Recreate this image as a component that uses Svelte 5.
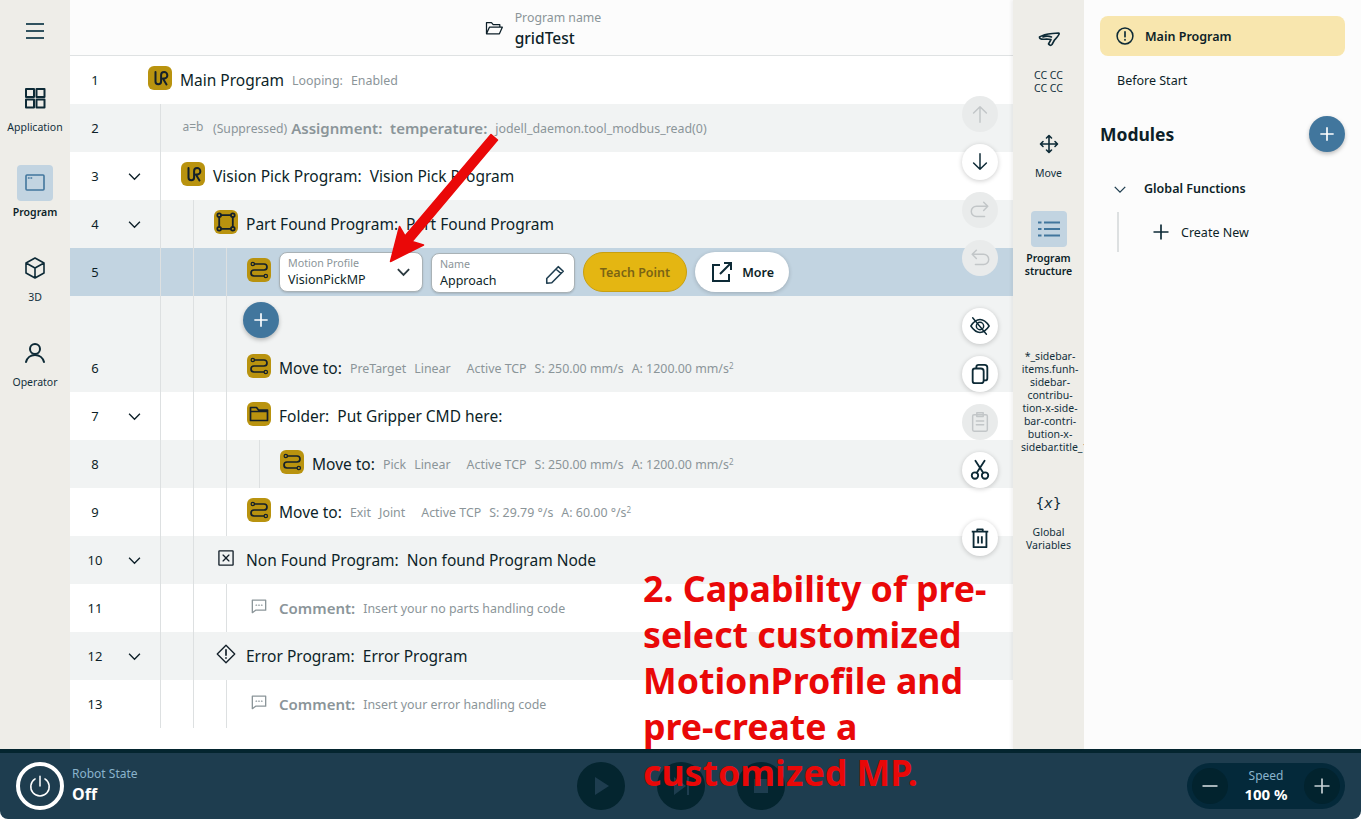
<script>
  const leftRail = [
    { id: 'grid', label: 'Application' },
    { id: 'window', label: 'Program', active: true },
    { id: 'cube', label: '3D' },
    { id: 'user', label: 'Operator' }
  ];

  const speedTail = [
    { t: 'Active TCP', gap: 16 },
    { t: 'S: 250.00 mm/s', gap: 8 },
    { t: 'A: 1200.00 mm/s', gap: 8, sup: '2' }
  ];

  const rows = [
    { n: 1, level: 0, icon: 'ur', title: 'Main Program', details: [{ t: 'Looping:', gap: 8 }, { t: 'Enabled', gap: 8 }] },
    { n: 2, level: 1, icon: 'assign', muted: true, pre: '(Suppressed)', title: 'Assignment:  temperature:', details: [{ t: 'jodell_daemon.tool_modbus_read(0)', gap: 8 }] },
    { n: 3, level: 1, open: true, icon: 'ur', title: 'Vision Pick Program:  Vision Pick Program' },
    { n: 4, level: 2, open: true, icon: 'frame', title: 'Part Found Program:  Part Found Program' },
    { n: 5, level: 3, icon: 'move', editing: true },
    { level: 3, add: true },
    { n: 6, level: 3, icon: 'move', title: 'Move to:', details: [{ t: 'PreTarget', gap: 8 }, { t: 'Linear', gap: 8 }, ...speedTail] },
    { n: 7, level: 3, open: true, icon: 'folder', title: 'Folder:  Put Gripper CMD here:' },
    { n: 8, level: 4, icon: 'move', title: 'Move to:', details: [{ t: 'Pick', gap: 8 }, { t: 'Linear', gap: 8 }, ...speedTail] },
    { n: 9, level: 3, icon: 'move', title: 'Move to:', details: [{ t: 'Exit', gap: 8 }, { t: 'Joint', gap: 8 }, { t: 'Active TCP', gap: 16 }, { t: 'S: 29.79 °/s', gap: 8 }, { t: 'A: 60.00 °/s', gap: 8, sup: '2' }] },
    { n: 10, level: 2, open: true, icon: 'cross', title: 'Non Found Program:  Non found Program Node' },
    { n: 11, level: 3, icon: 'comment', muted: true, title: 'Comment:', details: [{ t: 'Insert your no parts handling code', gap: 8 }] },
    { n: 12, level: 2, open: true, icon: 'warn', title: 'Error Program:  Error Program' },
    { n: 13, level: 3, icon: 'comment', muted: true, title: 'Comment:', details: [{ t: 'Insert your error handling code', gap: 8 }] }
  ];

  const floats = [
    { id: 'up', off: true },
    { id: 'down' },
    { id: 'redo', off: true },
    { id: 'undo', off: true, end: true },
    { id: 'eye' },
    { id: 'copy' },
    { id: 'paste', off: true },
    { id: 'cut', end: true },
    { id: 'trash' }
  ];

  function shade(row) {
    if (row.editing) return 'sel';
    if (row.add) return 'alt';
    return row.n % 2 === 0 ? 'alt' : '';
  }
</script>

{#snippet glyph(id)}
  <svg class="glyph" viewBox="0 0 24 24" fill="none" stroke="currentColor" stroke-width="1.6" stroke-linecap="round" stroke-linejoin="round">
    {#if id === 'grid'}
      <rect x="3" y="3" width="8" height="8" stroke-width="2" /><rect x="13.500" y="3" width="8" height="8" stroke-width="2" /><rect x="3" y="13.500" width="8" height="8" stroke-width="2" /><rect x="13.500" y="13.500" width="8" height="8" stroke-width="2" />
    {:else if id === 'window'}
      <rect x="3" y="4" width="18" height="15" rx="1" />
      <path d="M5.500 7h.6M8 7h.6" />
    {:else if id === 'cube'}
      <path d="M12 2 21 7v10l-9 5-9-5V7zM3 7l9 5 9-5M12 12v10" />
    {:else if id === 'user'}
      <circle cx="12" cy="8" r="5" stroke-width="2" /><path d="M3 21c1-4 4.500-7 9-7s8 3 9 7" stroke-width="2" />
    {:else if id === 'hand'}
      <path d="M2.500 11c3-2 8-3 13-3.500l6-.5c.8 0 .8 .8 .4 1.500-1.200 2.500-3 4-4.400 5.500l-2.500 4.500c-.5 1-1.500 1-2.200 .5l-1.300-1 2.500-4.500-4.500-.5C6 13.500 2 13.500 2.500 11zM6 11c2.500-1 6-1 8.500 0" />
    {:else if id === 'arrows'}
      <path d="M12 5v14M5 12h14M9.500 6 12 3.500 14.500 6M9.500 18l2.500 2.500 2.500-2.500M6 9.500 3.500 12 6 14.500M18 9.500l2.500 2.500-2.500 2.500" />
    {:else if id === 'list'}
      <path d="M1 5.500h3.500M7 5.500h16M1 12h3.500M7 12h16M1 18.500h3.500M7 18.500h16" stroke-width="1.800" stroke-linecap="butt" />
    {:else if id === 'up'}
      <path d="M12 21V4M5 11l7-7 7 7" />
    {:else if id === 'down'}
      <path d="M12 3v17M5 13l7 7 7-7" />
    {:else if id === 'redo'}
      <path d="M20 8H8a5 5 0 0 0 0 11h9M16 3.500 20.500 8 16 12.500" />
    {:else if id === 'undo'}
      <path d="M4 8h12a5 5 0 0 1 0 11H7M8 3.500 3.500 8 8 12.500" />
    {:else if id === 'eye'}
      <path d="M2 12c3-4.500 6-7 10-7s7 2.500 10 7c-3 4.500-6 7-10 7s-7-2.500-10-7z" /><circle cx="12" cy="12" r="4" /><path d="M4 3l15 18" />
    {:else if id === 'copy'}
      <path d="M8 6V4.500A2.500 2.500 0 0 1 10.500 2H17a3 3 0 0 1 3 3v11.500a2.500 2.500 0 0 1-2.500 2.500H16M6.500 6H13a3 3 0 0 1 3 3v10a3 3 0 0 1-3 3H6.500A2.500 2.500 0 0 1 4 19.500v-11A2.500 2.500 0 0 1 6.500 6z" stroke-width="2" />
    {:else if id === 'paste'}
      <rect x="4" y="4" width="16" height="18" rx="1.500" /><rect x="8.500" y="2" width="7" height="4" /><path d="M8 11h8M8 15h8" />
    {:else if id === 'cut'}
      <circle cx="6.500" cy="18" r="3.500" stroke-width="2" /><circle cx="17.500" cy="18" r="3.500" stroke-width="2" /><path d="M8.500 15 17 2M15.500 15 7 2" stroke-width="2" />
    {:else if id === 'trash'}
      <path d="M3 5h18M9 5V2.500h6V5M5 5v17h14V5M10 10v8M14 10v8" stroke-width="2" stroke-linecap="butt" />
    {/if}
  </svg>
{/snippet}

{#snippet nodeIcon(kind)}
  {#if kind === 'ur' || kind === 'frame' || kind === 'move' || kind === 'folder'}
    <span class="badge">
      <svg viewBox="0 0 24 24" fill="none" stroke="#14202a" stroke-width="1.700" stroke-linecap="round" stroke-linejoin="round">
        {#if kind === 'ur'}
          <path d="M7.500 6v9.500a2.800 2.800 0 0 0 5.600 0V9a3 3 0 0 1 3-3 3.200 3.200 0 0 1 0 6.500h-1.200l3.600 6" stroke-width="2" />
        {:else if kind === 'frame'}
          <path d="M7 5.200h10M7 18.800h10M5.200 7v10M18.800 7v10" stroke-width="1.800" />
          <circle cx="5.200" cy="5.200" r="1.900" /><circle cx="18.800" cy="5.200" r="1.900" /><circle cx="5.200" cy="18.800" r="1.900" /><circle cx="18.800" cy="18.800" r="1.900" />
        {:else if kind === 'move'}
          <circle cx="5.800" cy="6" r="1.700" stroke-width="1.200" /><circle cx="18.800" cy="18" r="1.700" stroke-width="1.200" />
          <path d="M7.500 6H17a3 3 0 0 1 0 6H7a3 3 0 0 0 0 6h10" />
        {:else}
          <path d="M3.500 18.500v-13h6l2 2.500h9v10.500zM3.500 9.500h17" />
        {/if}
      </svg>
    </span>
  {:else}
    <svg class="plain {kind}" viewBox="0 0 24 24" fill="none" stroke="currentColor" stroke-width="1.600" stroke-linejoin="round" stroke-linecap="round">
      {#if kind === 'cross'}
        <rect x="3.500" y="3.500" width="17" height="17" rx="0.500" /><path d="M8.500 8.500l7 7M15.500 8.500l-7 7" />
      {:else if kind === 'warn'}
        <path d="M12 1.500 22.500 12 12 22.500 1.500 12z" /><path d="M12 7v6.500M12 16.500v.6" stroke-width="2" />
      {:else if kind === 'comment'}
        <path d="M4 5h16v12H8l-4 3zM8.500 11h.6M11.700 11h.6M15 11h.6" />
      {/if}
    </svg>
  {/if}
{/snippet}

<div class="app">
  <div class="top">
    <nav class="rail left">
      <button class="burger" aria-label="Menu"><span></span><span></span><span></span></button>
      {#each leftRail as item}
        <div class="rail-item" class:active={item.active}>
          <div class="rail-icon">{@render glyph(item.id)}</div>
          <div class="rail-label">{item.label}</div>
        </div>
      {/each}
    </nav>

    <main class="main">
      <header class="head">
        <svg class="open-folder" viewBox="0 0 24 24" fill="none" stroke="currentColor" stroke-width="1.500" stroke-linejoin="round">
          <path d="M3 19V5.500h6l2 2.500h8v3M3 19l3.500-8H22l-3.500 8z" />
        </svg>
        <div>
          <div class="head-label">Program name</div>
          <div class="head-name">gridTest</div>
        </div>
      </header>

      <div class="tree">
        {#each rows as row}
          <div class="row {shade(row)}">
            <div class="gutter">
              <span class="num">{row.n ?? ''}</span>
              {#if row.open}
                <svg class="chev" viewBox="0 0 16 10" fill="none" stroke="currentColor" stroke-width="1.500"><path d="M2 2l6 6 6-6" /></svg>
              {/if}
            </div>
            {#each { length: Math.max(row.level - 1, 0) } as _}
              <span class="guide"></span>
            {/each}
            <div class="node" class:root={row.level === 0} class:muted={row.muted}>
              {#if row.add}
                <button class="plus small" aria-label="Add node"><svg viewBox="0 0 24 24" stroke="#fff" stroke-width="2"><path d="M12 4v16M4 12h16" /></svg></button>
              {:else}
                <span class="icon-slot">
                  {#if row.icon === 'assign'}
                    <span class="assign">a=b</span>
                  {:else}
                    {@render nodeIcon(row.icon)}
                  {/if}
                </span>
                {#if row.editing}
                  <div class="field">
                    <span class="field-label">Motion Profile</span>
                    <span class="field-value">VisionPickMP</span>
                    <svg class="field-chev" viewBox="0 0 16 10" fill="none" stroke="#2c3a40" stroke-width="2"><path d="M2 2l6 6 6-6" /></svg>
                  </div>
                  <div class="field name">
                    <span class="field-label">Name</span>
                    <span class="field-value">Approach</span>
                    <svg class="field-pen" viewBox="0 0 24 24" fill="none" stroke="#1e3d4f" stroke-width="1.700" stroke-linejoin="round"><path d="M3 17 15.500 4l5.500 5L8.500 21.500 3 22zM13 6.500l5.500 5" /></svg>
                  </div>
                  <button class="teach">Teach Point</button>
                  <button class="more">
                    <svg viewBox="0 0 24 24" fill="none" stroke="#0d2a36" stroke-width="2"><path d="M10 5H3v16h16v-7M14 3h7v7M21 3 10 14" /></svg>
                    More
                  </button>
                {:else}
                  {#if row.pre}<span class="pre">{row.pre}</span>{/if}
                  <span class="title">{row.title}</span>
                  {#each row.details ?? [] as d}
                    <span class="detail" style="margin-left: {d.gap}px">{d.t}{#if d.sup}<sup>{d.sup}</sup>{/if}</span>
                  {/each}
                {/if}
              {/if}
            </div>
          </div>
        {/each}
      </div>

      <div class="floats">
        {#each floats as f}
          <button class="float" class:off={f.off} class:end={f.end} aria-label={f.id}>{@render glyph(f.id)}</button>
        {/each}
      </div>
    </main>

    <nav class="rail right">
      <div class="rail-item tall">
        <div class="rail-icon">{@render glyph('hand')}</div>
        <div class="rail-label">CC CC<br />CC CC</div>
      </div>
      <div class="rail-item">
        <div class="rail-icon">{@render glyph('arrows')}</div>
        <div class="rail-label">Move</div>
      </div>
      <div class="rail-item active">
        <div class="rail-icon">{@render glyph('list')}</div>
        <div class="rail-label">Program<br />structure</div>
      </div>
      <div class="rail-item">
        <div class="rail-icon"></div>
        <div class="rail-label clip">*_sidebar-<br />items.funh-<br />sidebar-<br />contribu-<br />tion-x-side-<br />bar-contri-<br />bution-x-<br />sidebar.title_1</div>
      </div>
      <div class="rail-item">
        <div class="rail-icon"><span class="var">{'{'}<i>x</i>{'}'}</span></div>
        <div class="rail-label">Global<br />Variables</div>
      </div>
    </nav>

    <aside class="panel">
      <div class="pill">
        <svg viewBox="0 0 24 24" fill="none" stroke="#0d2a36" stroke-width="1.800" stroke-linecap="round"><circle cx="12" cy="12" r="9.500" /><path d="M12 7v6M12 16.300v.4" stroke-width="2" /></svg>
        Main Program
      </div>
      <div class="before">Before Start</div>
      <div class="modules">
        <h2>Modules</h2>
        <button class="plus" aria-label="Add module"><svg viewBox="0 0 24 24" stroke="#fff" stroke-width="2"><path d="M12 4v16M4 12h16" /></svg></button>
      </div>
      <div class="group">
        <svg viewBox="0 0 16 10" fill="none" stroke="#1e3d4f" stroke-width="1.500"><path d="M2 2l6 6 6-6" /></svg>
        Global Functions
      </div>
      <div class="create">
        <svg viewBox="0 0 24 24" stroke="#0d2a36" stroke-width="2"><path d="M12 3v18M3 12h18" /></svg>
        Create New
      </div>
    </aside>
  </div>

  <footer class="bar">
    <div class="state">
      <button class="power" aria-label="Power">
        <svg viewBox="0 0 24 24" fill="none" stroke="#fff" stroke-width="1.400" stroke-linecap="round"><path d="M12 3v9M7.500 5.500a8.500 8.500 0 1 0 9 0" /></svg>
      </button>
      <div>
        <div class="state-label">Robot State</div>
        <div class="state-value">Off</div>
      </div>
    </div>
    <div class="transport">
      <button class="tbtn" aria-label="Play"><svg viewBox="0 0 24 24" fill="#1e3d4f"><path d="M6 3l14 9-14 9z" /></svg></button>
      <button class="tbtn" aria-label="Step"><svg viewBox="0 0 24 24" fill="#1e3d4f"><path d="M5 3l12 9-12 9zM18 3h2v18h-2z" /></svg></button>
      <button class="tbtn" aria-label="Stop"><svg viewBox="0 0 24 24" fill="#1e3d4f"><rect x="5" y="5" width="14" height="14" /></svg></button>
    </div>
    <div class="speed">
      <button class="sbtn" aria-label="Slower"><svg viewBox="0 0 24 24" stroke="#c8d2d6" stroke-width="2"><path d="M3 12h18" /></svg></button>
      <div class="speed-text">
        <div class="speed-label">Speed</div>
        <div class="speed-value">100 %</div>
      </div>
      <button class="sbtn" aria-label="Faster"><svg viewBox="0 0 24 24" stroke="#c8d2d6" stroke-width="2"><path d="M12 3v18M3 12h18" /></svg></button>
    </div>
  </footer>

  <svg class="arrow" viewBox="0 0 1361 819">
    <path d="M491 134.500 497.500 140 412 241.500 423.500 245 390.500 261.500 399.500 226.500 405 236z" fill="#ea0808" stroke="#ea0808" stroke-width="1.500" stroke-linejoin="round" />
  </svg>

  <div class="note">2. Capability of pre-<br />select customized<br />MotionProfile and<br />pre-create a<br />customized MP.</div>
</div>

<style>
  :global(body) {
    margin: 0;
    background: #fff;
    color: #0d1f28;
    font-family: "Noto Sans", "Open Sans", sans-serif;
  }
  :global(*) { box-sizing: border-box; }
  button { font-family: inherit; border: 0; padding: 0; background: none; }
  .app { position: relative; height: 819px; overflow: hidden; display: flex; flex-direction: column; }
  .top { display: flex; height: 749px; }

  .rail { flex: none; background: #eeede8; display: flex; flex-direction: column; align-items: center; }
  .rail.left { width: 70px; }
  .rail.right { width: 71px; padding-top: 20px; gap: 31px; box-shadow: -2px 0 3px rgba(0, 0, 0, 0.05); z-index: 1; overflow: hidden; }
  .burger { display: flex; flex-direction: column; gap: 5px; margin: 23px 0 41px; width: 18px; }
  .burger span { height: 2px; background: #30525f; }
  .rail.left .rail-item { height: 85px; }
  .rail-item { display: flex; flex-direction: column; align-items: center; width: 100%; color: #0d2a36; flex: none; }
  .rail-icon { width: 36px; height: 36px; border-radius: 4px; display: flex; align-items: center; justify-content: center; }
  .rail-item.tall .rail-icon { height: 44px; padding-bottom: 8px; }
  .rail-item.active .rail-icon { background: #c2d4e1; color: #41769d; }
  .rail-label { margin-top: 5px; font-size: 10.500px; line-height: 13px; text-align: center; color: #12303c; }
  .rail-item.active .rail-label { font-weight: 600; color: #0d1f28; }
  .rail-label.clip { width: 58px; align-self: flex-start; margin-left: 8px; white-space: nowrap; }
  .glyph { width: 24px; height: 24px; display: block; }
  .var { font-size: 14px; font-family: "DejaVu Sans", sans-serif; }

  .main { flex: 1; position: relative; min-width: 0; background: #fff; }
  .head { height: 56px; border-bottom: 1px solid #dfe2e3; background: #fcfcfc; display: flex; justify-content: center; align-items: center; gap: 11px; }
  .open-folder { width: 20px; height: 20px; margin-left: 2px; }
  .head-label { font-size: 12.300px; line-height: 16px; color: #8b9599; margin-top: 5px; }
  .head-name { font-size: 15.500px; line-height: 24px; font-weight: 500; color: #0d1f28; }

  .row { height: 48px; display: flex; align-items: stretch; background: #fff; }
  .row.alt { background: #f1f3f3; }
  .row.sel { background: #c2d4e1; }
  .gutter { width: 91px; flex: none; display: flex; align-items: center; border-right: 1px solid transparent; }
  .row:not(:first-child) .gutter { border-right-color: #dde0e1; }
  .num { width: 50px; text-align: center; font-size: 13px; color: #0d1f28; }
  .chev { width: 15px; height: 9px; margin-left: 7px; color: #0d1f28; }
  .guide { width: 33px; flex: none; border-right: 1px solid #dde0e1; }
  .node { display: flex; align-items: center; margin-left: 20px; white-space: pre; min-width: 0; }
  .node.root { margin-left: -13px; }
  .icon-slot { width: 24px; height: 24px; margin-right: 8px; margin-top: -4px; flex: none; display: flex; align-items: center; justify-content: center; }
  .badge { width: 24px; height: 24px; border-radius: 6px; background: #b9930f; display: block; }
  .badge svg { display: block; width: 24px; height: 24px; }
  .plain { width: 20px; height: 20px; color: #14202a; }
  .plain.comment { color: #8b9599; }
  .assign { font-size: 12px; color: #8b9599; }
  .title { font-size: 15.500px; color: #0d1f28; }
  .detail { font-size: 12.400px; color: #8b9599; }
  .detail sup { font-size: 8px; line-height: 0; vertical-align: 4px; }
  .pre { font-size: 12.200px; color: #8b9599; margin-right: 4px; }
  .muted .title { color: #8b9599; font-weight: 600; font-size: 15px; }

  .field { position: relative; width: 144px; height: 40px; margin-right: 8px; background: #fff; border: 1px solid #a9b2b6; border-radius: 8px; padding: 3px 8px; display: flex; flex-direction: column; box-shadow: 0 1px 2px rgba(0, 0, 0, 0.15); }
  .field.name { margin-top: 2px; }
  .field-label { font-size: 10.700px; line-height: 15px; color: #8b9599; }
  .field-value { font-size: 12.500px; line-height: 18px; color: #0d1f28; }
  .field-chev { position: absolute; right: 11px; top: 14px; width: 15px; height: 10px; }
  .field-pen { position: absolute; right: 8px; top: 9px; width: 22px; height: 22px; }
  .teach { width: 104px; height: 40px; margin-right: 8px; border-radius: 20px; background: #e4b612; border: 1px solid #c89f10; color: #7a6414; font-size: 12.500px; font-weight: 600; }
  .more { width: 94px; height: 40px; border-radius: 20px; background: #fff; color: #0d1f28; font-size: 12.500px; font-weight: 600; display: flex; align-items: center; gap: 5px; padding-left: 15px; box-shadow: 0 1px 4px rgba(0, 0, 0, 0.2); }
  .more svg { width: 24px; height: 24px; }

  .plus { width: 36px; height: 36px; border-radius: 50%; background: #41769d; display: flex; align-items: center; justify-content: center; box-shadow: 0 2px 4px rgba(0, 0, 0, 0.25); flex: none; }
  .plus svg { width: 20px; height: 20px; }
  .plus.small { margin-left: -4px; }

  .floats { position: absolute; right: 15px; top: 96px; display: flex; flex-direction: column; gap: 12px; }
  .float { width: 36px; height: 36px; border-radius: 50%; background: #fff; color: #0d2a36; display: flex; align-items: center; justify-content: center; box-shadow: 0 1px 5px rgba(0, 0, 0, 0.2); }
  .float .glyph { width: 22px; height: 22px; }
  .float.off { background: #e9ebeb; color: #c2c6c8; box-shadow: none; }
  .float.end { margin-bottom: 20px; }

  .panel { flex: none; width: 277px; background: #fcfcfc; padding: 16px 16px 0; display: flex; flex-direction: column; }
  .pill { height: 40px; background: #f8e6ae; border-radius: 8px; display: flex; align-items: center; gap: 10px; padding-left: 15px; font-size: 12.500px; font-weight: 600; }
  .pill svg { width: 20px; height: 20px; }
  .before { margin: 16px 0 0 17px; font-size: 12.500px; line-height: 18px; }
  .modules { display: flex; justify-content: space-between; align-items: center; margin-top: 26px; }
  h2 { margin: 0; font-size: 17.500px; font-weight: 700; }
  .group { display: flex; align-items: center; gap: 17px; margin: 28px 0 0 13px; font-size: 12.500px; font-weight: 600; line-height: 18px; }
  .group svg { width: 14px; height: 9px; }
  .create { display: flex; align-items: center; gap: 10px; margin: 14px 0 0 17px; padding: 0 0 0 32px; height: 40px; border-left: 2px solid #dde0e1; font-size: 12.500px; }
  .create svg { width: 20px; height: 20px; }

  .bar { height: 70px; background: #1e3d4f; border-top: 4px solid #04252f; display: grid; grid-template-columns: 1fr auto 1fr; align-items: center; padding: 0 16px; border-radius: 0 0 8px 8px; }
  .state { display: flex; align-items: center; gap: 8px; }
  .power { width: 48px; height: 48px; border-radius: 50%; border: 4px solid #fff; background: #1e3d4f; display: flex; align-items: center; justify-content: center; }
  .power svg { width: 26px; height: 26px; }
  .state-label { font-size: 12px; line-height: 16px; color: #8ab4cc; }
  .state-value { font-size: 16px; line-height: 24px; font-weight: 700; color: #fff; }
  .transport { display: flex; gap: 32px; }
  .tbtn { width: 48px; height: 48px; border-radius: 50%; background: #04252f; display: flex; align-items: center; justify-content: center; }
  .tbtn svg { width: 24px; height: 24px; }
  .speed { justify-self: end; width: 158px; height: 46px; border-radius: 23px; background: #04293a; display: flex; align-items: center; justify-content: space-between; padding: 0 5px; }
  .sbtn { width: 36px; height: 36px; border-radius: 50%; background: #02232e; display: flex; align-items: center; justify-content: center; }
  .sbtn svg { width: 20px; height: 20px; }
  .speed-text { text-align: center; }
  .speed-label { font-size: 12px; line-height: 16px; color: #8ab4cc; }
  .speed-value { font-size: 15px; line-height: 20px; font-weight: 700; color: #fff; }

  .arrow { position: absolute; inset: 0; width: 1361px; height: 819px; pointer-events: none; }
  .note { position: absolute; left: 643px; top: 565px; font-size: 35.700px; line-height: 46px; font-weight: 700; color: #e90808; white-space: nowrap; }
</style>
